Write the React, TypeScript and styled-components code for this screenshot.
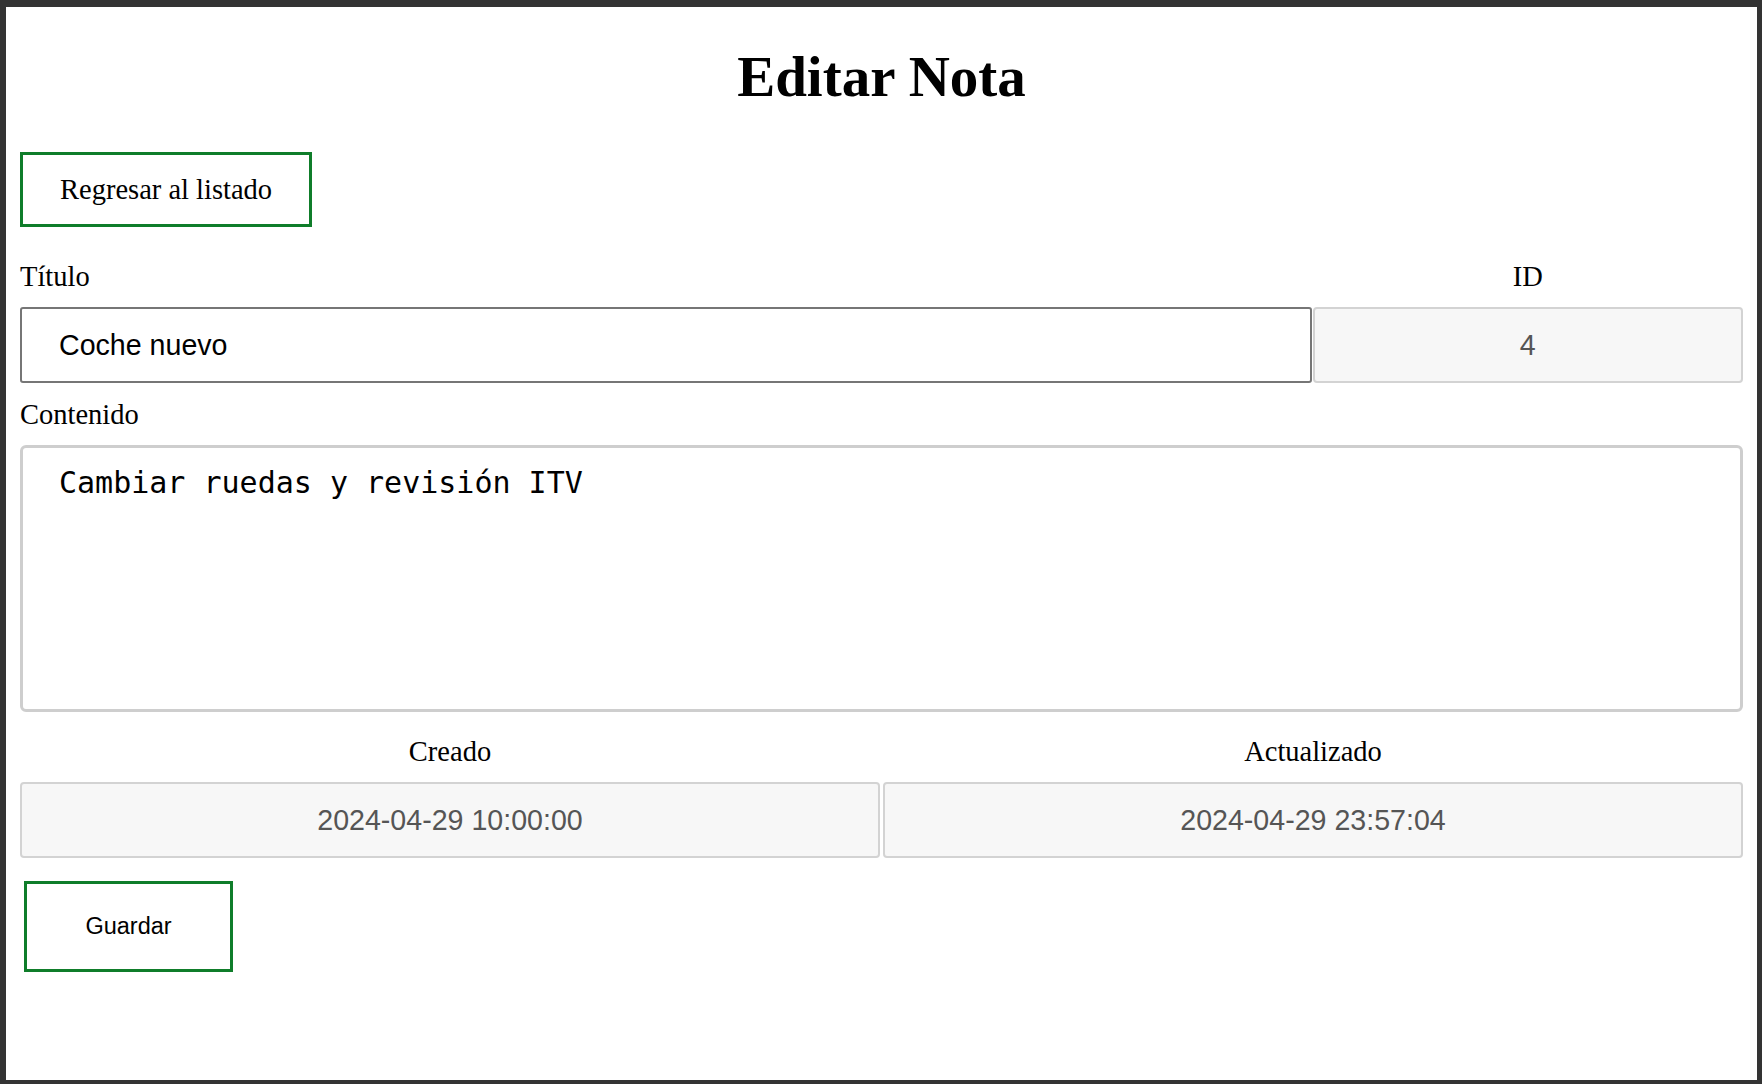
import React from "react";
import styled, { createGlobalStyle } from "styled-components";

const GlobalStyle = createGlobalStyle`
  html, body {
    margin: 0;
    padding: 0;
    background: #333333;
  }
  body {
    font-family: "Liberation Serif", "Times New Roman", serif;
  }
  * {
    box-sizing: border-box;
  }
`;

const Frame = styled.div`
  min-height: 100vh;
  padding: 7px 5px 4px 6px;
  background: #333333;
  display: flex;
`;

const Panel = styled.main`
  flex: 1;
  background: #ffffff;
  padding: 38px 14px 0;
  display: flex;
  flex-direction: column;
  align-items: stretch;
`;

const Title = styled.h1`
  margin: 0;
  font-family: "Liberation Serif", "Times New Roman", serif;
  font-weight: 700;
  font-size: 57px;
  line-height: 64px;
  text-align: center;
  color: #000000;
`;

const BackButton = styled.button`
  align-self: flex-start;
  margin-top: 43px;
  height: 75px;
  padding: 0 37px;
  background: #ffffff;
  border: 3px solid #0f7d2a;
  border-radius: 0;
  font-family: "Liberation Serif", "Times New Roman", serif;
  font-size: 28.5px;
  line-height: 32px;
  color: #000000;
  cursor: pointer;
`;

const Form = styled.form`
  display: flex;
  flex-direction: column;
  align-items: stretch;
`;

const Row = styled.div<{ $cols: string; $gap: number; $top: number }>`
  display: grid;
  grid-template-columns: ${(p) => p.$cols};
  column-gap: ${(p) => p.$gap}px;
  margin-top: ${(p) => p.$top}px;
`;

const Field = styled.div<{ $top?: number }>`
  display: flex;
  flex-direction: column;
  margin-top: ${(p) => p.$top ?? 0}px;
  min-width: 0;
`;

const Label = styled.label<{ $center?: boolean }>`
  display: block;
  margin-bottom: 14px;
  font-family: "Liberation Serif", "Times New Roman", serif;
  font-size: 28.5px;
  line-height: 32px;
  color: #000000;
  text-align: ${(p) => (p.$center ? "center" : "left")};
`;

const TextInput = styled.input`
  width: 100%;
  height: 76px;
  padding: 0 37px;
  border: 2px solid #767676;
  border-radius: 3px;
  background: #ffffff;
  font-family: "Liberation Sans", Arial, sans-serif;
  font-size: 28.6px;
  color: #000000;
  outline: none;
`;

const ReadOnlyInput = styled.input`
  width: 100%;
  height: 76px;
  padding: 0 12px;
  border: 2px solid #d3d3d3;
  border-radius: 4px;
  background: #f7f7f7;
  font-family: "Liberation Sans", Arial, sans-serif;
  font-size: 28.6px;
  color: #555555;
  text-align: center;
  outline: none;
`;

const TextArea = styled.textarea`
  display: block;
  width: 100%;
  height: 267px;
  padding: 17px 36px;
  border: 3px solid #cecece;
  border-radius: 6px;
  background: #ffffff;
  font-family: "DejaVu Sans Mono", "Liberation Mono", monospace;
  font-size: 30px;
  color: #000000;
  resize: none;
  outline: none;
`;

const SaveButton = styled.button`
  align-self: flex-start;
  margin: 23px 0 0 4px;
  width: 209px;
  height: 91px;
  background: #ffffff;
  border: 3px solid #0f7d2a;
  border-radius: 0;
  font-family: "Liberation Sans", Arial, sans-serif;
  font-size: 23.5px;
  color: #000000;
  cursor: pointer;
`;

export default function App() {
  return (
    <>
      <GlobalStyle />
      <Frame>
        <Panel>
          <Title>Editar Nota</Title>
          <BackButton type="button">Regresar al listado</BackButton>
          <Form onSubmit={(e) => e.preventDefault()}>
            <Row $cols="3fr 1fr" $gap={1} $top={34}>
              <Field>
                <Label htmlFor="titulo">Título</Label>
                <TextInput id="titulo" defaultValue="Coche nuevo" />
              </Field>
              <Field>
                <Label $center htmlFor="id">ID</Label>
                <ReadOnlyInput id="id" readOnly defaultValue="4" />
              </Field>
            </Row>
            <Field $top={16}>
              <Label htmlFor="contenido">Contenido</Label>
              <TextArea id="contenido" defaultValue="Cambiar ruedas y revisión ITV" />
            </Field>
            <Row $cols="1fr 1fr" $gap={3} $top={24}>
              <Field>
                <Label $center htmlFor="creado">Creado</Label>
                <ReadOnlyInput id="creado" readOnly defaultValue="2024-04-29 10:00:00" />
              </Field>
              <Field>
                <Label $center htmlFor="actualizado">Actualizado</Label>
                <ReadOnlyInput id="actualizado" readOnly defaultValue="2024-04-29 23:57:04" />
              </Field>
            </Row>
            <SaveButton type="submit">Guardar</SaveButton>
          </Form>
        </Panel>
      </Frame>
    </>
  );
}
